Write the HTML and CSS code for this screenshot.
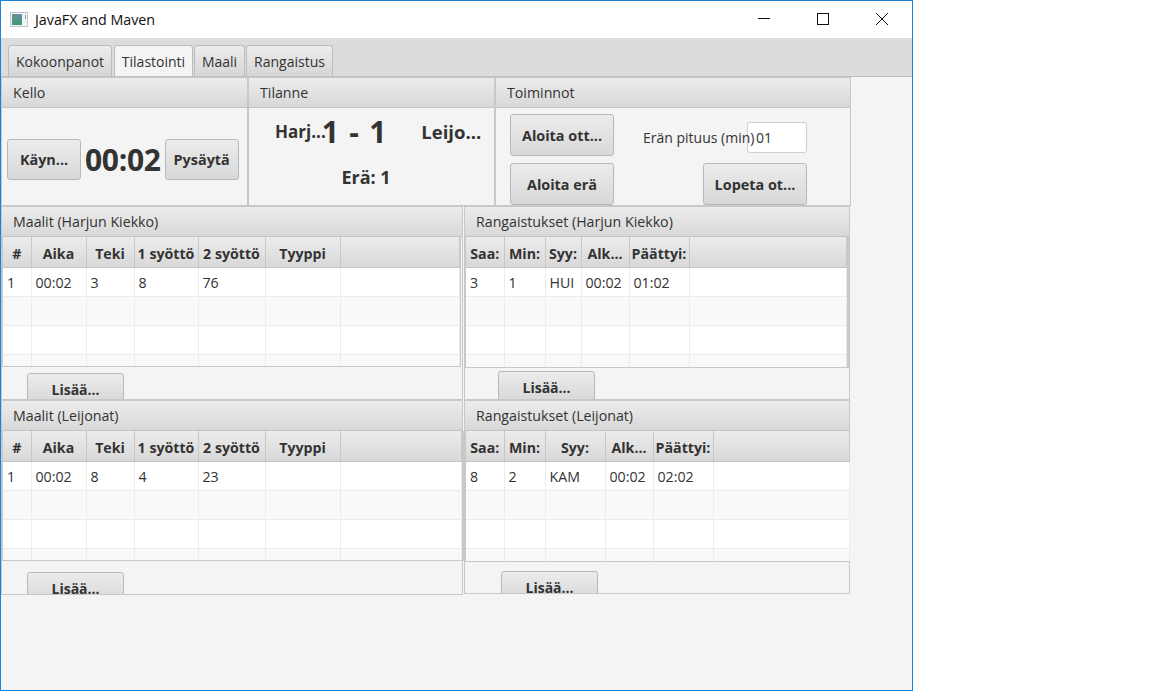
FILE: index.html
```html
<!DOCTYPE html>
<html lang="en">
<head>
  <meta charset="UTF-8" />
  <title>JavaFX and Maven</title>
  <link rel="stylesheet" href="styles.css">
</head>
<body>
<div class="window">
  <div class="titlebar">
    <svg class="app-icon" width="18" height="16" viewBox="0 0 18 16">
      <defs>
        <linearGradient id="appFill" x1="0" y1="0" x2="0" y2="1">
          <stop offset="0" stop-color="#6a8f9f"/>
          <stop offset="1" stop-color="#3f9a72"/>
        </linearGradient>
      </defs>
      <rect x="0.5" y="0.5" width="17" height="14" fill="#f4f4f4" stroke="#c4c4c4"/>
      <rect x="2" y="2" width="10" height="11" fill="url(#appFill)"/>
      <rect x="15" y="3" width="1" height="4" fill="#7fa4b0"/>
    </svg>
    <span class="app-title">JavaFX and Maven</span>
    <div class="win-buttons">
      <svg class="win-btn" width="12" height="12" viewBox="0 0 12 12"><path d="M0 5.5H12" stroke="#111" fill="none"/></svg>
      <svg class="win-btn" width="12" height="12" viewBox="0 0 12 12"><rect x="0.5" y="0.5" width="11" height="11" stroke="#111" fill="none"/></svg>
      <svg class="win-btn" width="12" height="12" viewBox="0 0 12 12"><path d="M0 0L12 12M12 0L0 12" stroke="#111" fill="none"/></svg>
    </div>
  </div>

  <div class="tabs">
    <div class="tab tab-kokoon">Kokoonpanot</div>
    <div class="tab tab-tilasto active">Tilastointi</div>
    <div class="tab tab-maali">Maali</div>
    <div class="tab tab-rangaistus">Rangaistus</div>
  </div>

  <main class="content">
    <div class="row row-top">
      <section class="panel kello">
        <div class="panel-title">Kello</div>
        <div class="panel-body kello-body">
          <button class="btn w74">Käyn...</button>
          <span class="clock">00:02</span>
          <button class="btn w74">Pysäytä</button>
        </div>
      </section>
      <section class="panel tilanne">
        <div class="panel-title">Tilanne</div>
        <div class="panel-body tilanne-body">
          <div class="score-line">
            <span class="team home">Harj...</span>
            <span class="score">1 - 1</span>
            <span class="team away">Leijo...</span>
          </div>
          <div class="period">Erä: 1</div>
        </div>
      </section>
      <section class="panel toiminnot">
        <div class="panel-title">Toiminnot</div>
        <div class="panel-body toiminnot-body">
          <div class="action-row">
            <button class="btn w104">Aloita ott...</button>
            <label class="len-label">Erän pituus (min)</label>
            <input class="len-input" type="text" value="01">
          </div>
          <div class="action-row second">
            <button class="btn w104">Aloita erä</button>
            <button class="btn w104 end">Lopeta ot...</button>
          </div>
        </div>
      </section>
    </div>

    <div class="row row-mid">
      <section class="panel goals">
        <div class="panel-title">Maalit (Harjun Kiekko)</div>
        <div class="table-wrap goals-wrap">
          <table class="grid goals-grid">
            <thead><tr><th>#</th><th>Aika</th><th>Teki</th><th>1 syöttö</th><th>2 syöttö</th><th>Tyyppi</th><th></th></tr></thead>
            <tbody>
              <tr><td>1</td><td>00:02</td><td>3</td><td>8</td><td>76</td><td></td><td></td></tr>
              <tr><td></td><td></td><td></td><td></td><td></td><td></td><td></td></tr>
              <tr><td></td><td></td><td></td><td></td><td></td><td></td><td></td></tr>
              <tr><td></td><td></td><td></td><td></td><td></td><td></td><td></td></tr>
            </tbody>
          </table>
        </div>
        <div class="add-bar"><button class="btn add">Lisää...</button></div>
      </section>
      <section class="panel penalties">
        <div class="panel-title">Rangaistukset (Harjun Kiekko)</div>
        <div class="table-wrap pen-wrap">
          <table class="grid pen-grid">
            <thead><tr><th>Saa:</th><th>Min:</th><th>Syy:</th><th>Alk...</th><th>Päättyi:</th><th></th></tr></thead>
            <tbody>
              <tr><td>3</td><td>1</td><td>HUI</td><td>00:02</td><td>01:02</td><td></td></tr>
              <tr><td></td><td></td><td></td><td></td><td></td><td></td></tr>
              <tr><td></td><td></td><td></td><td></td><td></td><td></td></tr>
              <tr><td></td><td></td><td></td><td></td><td></td><td></td></tr>
            </tbody>
          </table>
        </div>
        <div class="add-bar pen-add"><button class="btn add">Lisää...</button></div>
      </section>
    </div>

    <div class="row row-low">
      <section class="panel goals">
        <div class="panel-title">Maalit (Leijonat)</div>
        <div class="table-wrap goals-wrap thick-right">
          <table class="grid goals-grid">
            <thead><tr><th>#</th><th>Aika</th><th>Teki</th><th>1 syöttö</th><th>2 syöttö</th><th>Tyyppi</th><th></th></tr></thead>
            <tbody>
              <tr><td>1</td><td>00:02</td><td>8</td><td>4</td><td>23</td><td></td><td></td></tr>
              <tr><td></td><td></td><td></td><td></td><td></td><td></td><td></td></tr>
              <tr><td></td><td></td><td></td><td></td><td></td><td></td><td></td></tr>
              <tr><td></td><td></td><td></td><td></td><td></td><td></td><td></td></tr>
            </tbody>
          </table>
        </div>
        <div class="add-bar low-add"><button class="btn add">Lisää...</button></div>
      </section>
      <section class="panel penalties flat-right">
        <div class="panel-title">Rangaistukset (Leijonat)</div>
        <div class="table-wrap pen-wrap open-right">
          <table class="grid pen-grid wide-syy">
            <thead><tr><th>Saa:</th><th>Min:</th><th>Syy:</th><th>Alk...</th><th>Päättyi:</th><th></th></tr></thead>
            <tbody>
              <tr><td>8</td><td>2</td><td>KAM</td><td>00:02</td><td>02:02</td><td></td></tr>
              <tr><td></td><td></td><td></td><td></td><td></td><td></td></tr>
              <tr><td></td><td></td><td></td><td></td><td></td><td></td></tr>
              <tr><td></td><td></td><td></td><td></td><td></td><td></td></tr>
            </tbody>
          </table>
        </div>
        <div class="add-bar pen-low-add"><button class="btn add">Lisää...</button></div>
      </section>
    </div>
  </main>
</div>
</body>
</html>
```

FILE: styles.css
```css
* {
  box-sizing: border-box;
}

body {
  margin: 0;
  background: white;
  font-family: "Open Sans", "Noto Sans", sans-serif;
  font-size: 14px;
  color: #333;
}

.window {
  width: 913px;
  height: 691px;
  border: 1px solid #1883d7;
  display: flex;
  flex-direction: column;
  background: #f4f4f4;
  overflow: hidden;
}

/* title bar */
.titlebar {
  height: 37px;
  background: white;
  display: flex;
  align-items: center;
  padding-left: 9px;
  color: #111;
}

.app-icon {
  margin-right: 7px;
}

.app-title {
  font-size: 14.3px;
}

.win-buttons {
  margin-left: auto;
  display: flex;
  gap: 47px;
  padding: 0 24px 1px 0;
}

/* tabs */
.tabs {
  height: 39px;
  background: #dcdcdc;
  border-bottom: 1px solid #c0c0c0;
  display: flex;
  align-items: flex-end;
  gap: 1px;
  padding-left: 7px;
}

.tab {
  height: 31px;
  display: flex;
  align-items: center;
  justify-content: center;
  border: 1px solid #bdbdbd;
  border-bottom: none;
  border-radius: 3px 3px 0 0;
  background: linear-gradient(#ececec, #d6d6d6);
  font-size: 14px;
}

.tab.active {
  background: #f4f4f4;
}

.tab-kokoon {
  width: 104px;
  margin-right: 1px;
}

.tab-tilasto {
  width: 79px;
}

.tab-maali {
  width: 51px;
}

.tab-rangaistus {
  width: 87px;
}

/* panels */
.content {
  flex: 1;
}

.row {
  display: flex;
}

.row-top {
  height: 129px;
}

.row-mid {
  height: 194px;
}

.row-low {
  height: 195px;
}

.panel {
  border: 1px solid #c8c8c8;
  flex: none;
  display: flex;
  flex-direction: column;
}

.panel + .panel {
  margin-left: 1px;
}

.panel-title {
  height: 30px;
  flex: none;
  background: linear-gradient(#ececec, #d8d8d8);
  border-bottom: 1px solid #c4c4c4;
  padding-left: 11px;
  line-height: 29px;
  font-size: 14.2px;
}

.kello {
  width: 247px;
}

.tilanne {
  width: 247px;
  margin-left: 0 !important;
}

.toiminnot {
  width: 356px;
  margin-left: 0 !important;
}

.goals {
  width: 462px;
}

.penalties {
  width: 386px;
}

.flat-right {
  height: 194px;
  border-right: none;
}

.flat-right .panel-title,
.flat-right .add-bar {
  border-right: 1px solid #c8c8c8;
}

/* buttons */
.btn {
  height: 42px;
  padding: 0;
  border: 1px solid #b8b8b8;
  border-radius: 3px;
  background: linear-gradient(#ececec, #d8d8d8);
  font-family: inherit;
  font-size: 14.4px;
  font-weight: 700;
  color: #333;
  flex: none;
}

.w74 {
  width: 74px;
  height: 41px;
}

.w104 {
  width: 104px;
}

.add {
  width: 97px;
  height: 30px;
  padding-top: 2px;
  font-size: 14px;
}

/* kello */
.kello-body {
  flex: 1;
  display: flex;
  align-items: center;
  gap: 4px;
  padding: 5px 0 0 5px;
}

.clock {
  font-size: 30px;
  font-weight: 700;
  letter-spacing: -0.3px;
}

/* tilanne */
.tilanne-body {
  flex: 1;
}

.score-line {
  display: flex;
  align-items: center;
  height: 47px;
  padding-left: 26px;
}

.team {
  font-size: 17px;
  font-weight: 700;
}

.score {
  font-size: 30px;
  font-weight: 700;
  margin-left: -4px;
  white-space: pre;
  word-spacing: 2.5px;
}

.away {
  margin-left: 35px;
  font-size: 18.5px;
}

.period {
  margin-top: 10px;
  font-size: 18px;
  font-weight: 700;
  text-align: center;
  padding-right: 11px;
}

/* toiminnot */
.toiminnot-body {
  flex: 1;
  padding: 6px 0 0 14px;
}

.action-row {
  display: flex;
  align-items: center;
}

.action-row.second {
  margin-top: 7px;
}

/* the label runs past its box and sits over the field */
.len-label {
  position: relative;
  margin: 4px 0 0 29px;
  width: 104px;
  white-space: nowrap;
}

.len-input {
  width: 60px;
  height: 31px;
  margin-top: 4px;
  border: 1px solid #cfcfcf;
  border-radius: 3px;
  background: white;
  padding: 0 0 0 8px;
  font-family: inherit;
  font-size: 14px;
  color: #333;
}

.end {
  margin-left: 89px;
}

/* tables */
.table-wrap {
  height: 130px;
  flex: none;
  overflow: hidden;
  background: white;
}

.goals-wrap {
  margin-right: 1px;
  border: 1px solid #c8c8c8;
  border-top: none;
}

.pen-wrap {
  height: 131px;
  border: 1px solid #c8c8c8;
  border-top: none;
  border-right-width: 2px;
}

.thick-right {
  position: relative;
  z-index: 1;
  border-right-width: 3px;
  margin-right: -3px;
}

.open-right {
  border-right: none;
}

.grid {
  table-layout: fixed;
  border-collapse: collapse;
  width: 100%;
  font-size: 14.2px;
}

.grid th {
  height: 30px;
  padding: 3px 0 0;
  background: linear-gradient(#ececec, #d8d8d8);
  border-right: 1px solid #c8c8c8;
  border-bottom: 1px solid #c4c4c4;
  font-weight: 700;
  text-align: center;
  white-space: nowrap;
}

.grid td {
  height: 29px;
  padding: 2px 0 0 4px;
  border-right: 1px solid #ececec;
  border-bottom: 1px solid #ececec;
}

.grid tbody tr:nth-child(even) td {
  background: #f9f9f9;
}

.goals-grid th:nth-child(1) { width: 28px; }
.goals-grid th:nth-child(2) { width: 55px; }
.goals-grid th:nth-child(3) { width: 48px; }
.goals-grid th:nth-child(4) { width: 64px; }
.goals-grid th:nth-child(5) { width: 67px; }
.goals-grid th:nth-child(6) { width: 75px; }

.pen-grid th:nth-child(1) { width: 38px; }
.pen-grid th:nth-child(2) { width: 41px; }
.pen-grid th:nth-child(3) { width: 36px; }
.pen-grid th:nth-child(4) { width: 48px; }
.pen-grid th:nth-child(5) { width: 60px; }

.pen-grid.wide-syy th:nth-child(3) { width: 60px; }

.add-bar {
  flex: 1;
  min-height: 0;
  overflow: hidden;
  padding: 6px 0 0 25px;
}

.low-add {
  padding-top: 11px;
}

.pen-add {
  padding: 3px 0 0 33px;
}

.pen-low-add {
  padding: 9px 0 0 36px;
}
```
